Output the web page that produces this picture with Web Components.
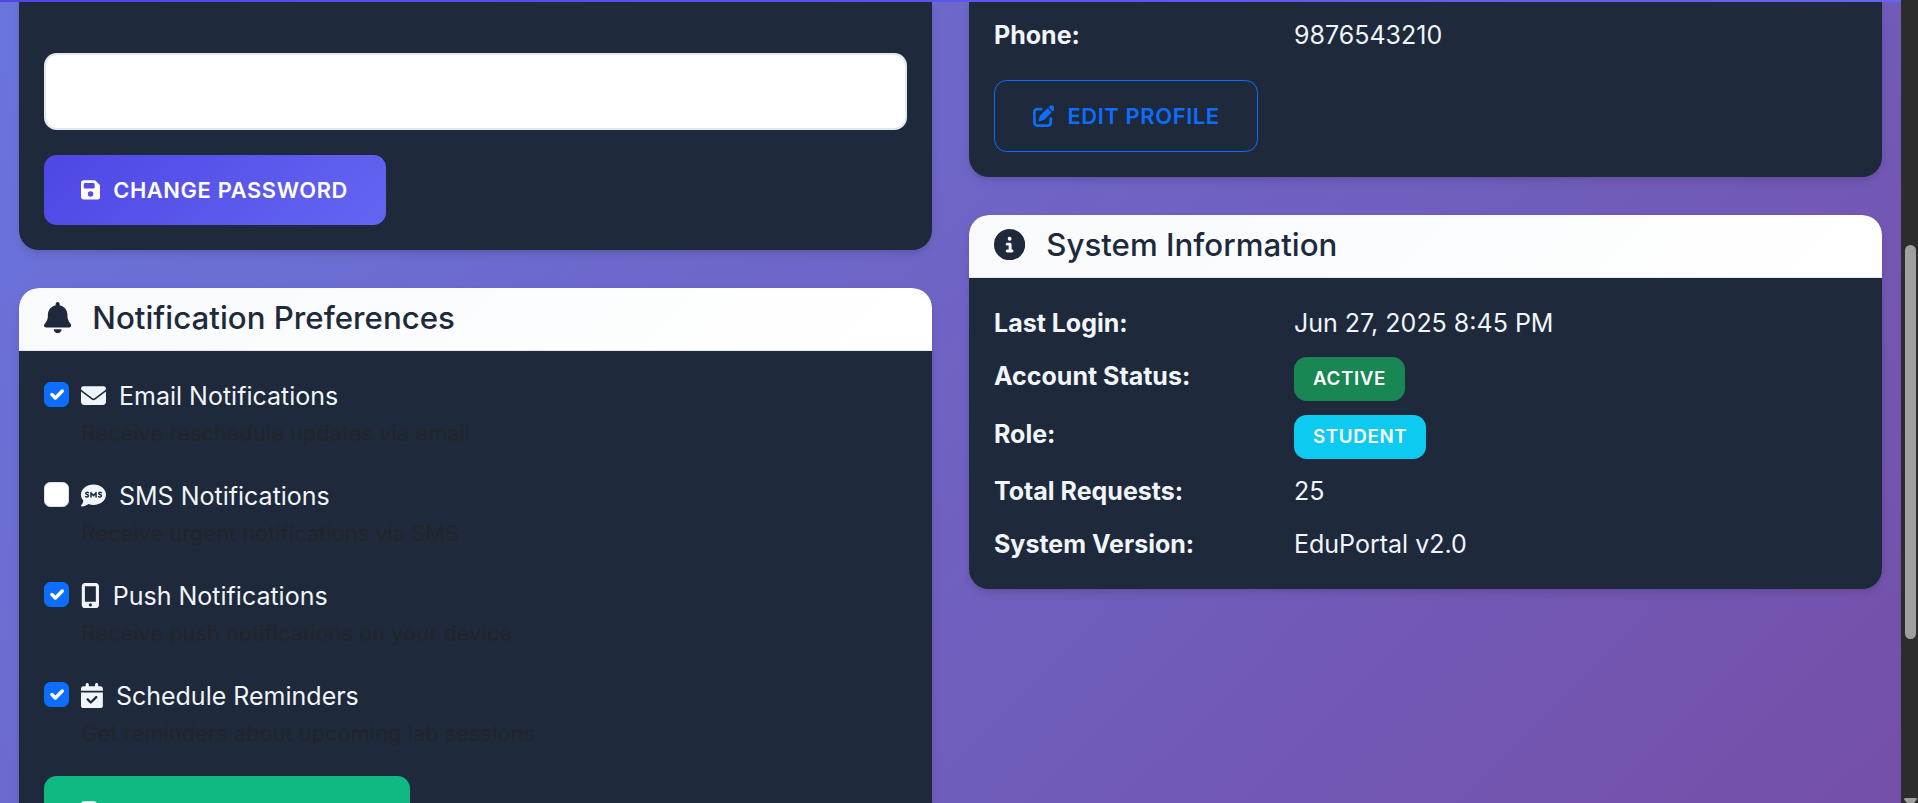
<!DOCTYPE html>
<html lang="en"><head><meta charset="utf-8"><title>EduPortal Settings</title>
<style>
body{margin:0;height:803px;overflow:hidden;font-family:Inter,"Open Sans",sans-serif;font-size:25px;line-height:40px;color:#f1f5f9}
</style></head><body>
<edu-page>
  <edu-card slot="left" class="open-top">
    <edu-field></edu-field>
    <edu-button icon="save" kind="primary">CHANGE PASSWORD</edu-button>
  </edu-card>
  <edu-card slot="left" heading="Notification Preferences" icon="bell">
    <edu-check icon="mail" label="Email Notifications" checked>Receive reschedule updates via email</edu-check>
    <edu-check icon="sms" label="SMS Notifications">Receive urgent notifications via SMS</edu-check>
    <edu-check icon="phone" label="Push Notifications" checked>Receive push notifications on your device</edu-check>
    <edu-check icon="cal" label="Schedule Reminders" checked>Get reminders about upcoming lab sessions</edu-check>
    <edu-button icon="save" kind="success">UPDATE PREFERENCES</edu-button>
  </edu-card>
  <edu-card slot="right" class="open-top short">
    <edu-row label="Phone:">9876543210</edu-row>
    <edu-button icon="edit" kind="outline">EDIT PROFILE</edu-button>
  </edu-card>
  <edu-card slot="right" heading="System Information" icon="info">
    <edu-row label="Last Login:">Jun 27, 2025 8:45 PM</edu-row>
    <edu-row label="Account Status:" class="tagged"><edu-badge style="--bg:#198754">ACTIVE</edu-badge></edu-row>
    <edu-row label="Role:" class="tagged role"><edu-badge style="--bg:#0dcaf0">STUDENT</edu-badge></edu-row>
    <edu-row label="Total Requests:">25</edu-row>
    <edu-row label="System Version:">EduPortal v2.0</edu-row>
  </edu-card>
</edu-page>
<script>
const ICONS={
save:[448,'M64 32C28.7 32 0 60.7 0 96V416c0 35.3 28.7 64 64 64H384c35.3 0 64-28.7 64-64V173.3c0-17-6.7-33.3-18.7-45.3L352 50.7C340 38.7 323.7 32 306.7 32H64zm0 96c0-17.7 14.3-32 32-32H288c17.7 0 32 14.3 32 32v64c0 17.7-14.3 32-32 32H96c-17.7 0-32-14.3-32-32V128zM224 288a64 64 0 1 1 0 128 64 64 0 1 1 0-128z'],
bell:[448,'M224 0c-17.7 0-32 14.3-32 32V51.2C119 66 64 130.6 64 208v18.8c0 47-17.3 92.4-48.5 127.6l-7.4 8.3c-8.4 9.4-10.4 22.9-5.3 34.4S19.4 416 32 416H416c12.6 0 24-7.4 29.2-18.9s3.1-25-5.3-34.4l-7.4-8.3C401.3 319.2 384 273.9 384 226.8V208c0-77.4-55-142-128-156.8V32c0-17.7-14.3-32-32-32zm45.3 493.3c12-12 18.7-28.3 18.7-45.3H224 160c0 17 6.7 33.3 18.7 45.3s28.3 18.7 45.3 18.7s33.3-6.7 45.3-18.7z'],
info:[512,'M256 512A256 256 0 1 0 256 0a256 256 0 1 0 0 512zM216 336h24V272H216c-13.3 0-24-10.7-24-24s10.7-24 24-24h48c13.3 0 24 10.7 24 24v88h8c13.3 0 24 10.7 24 24s-10.7 24-24 24H216c-13.3 0-24-10.7-24-24s10.7-24 24-24zm40-208a32 32 0 1 1 0 64 32 32 0 1 1 0-64z'],
mail:[512,'M48 64C21.5 64 0 85.5 0 112c0 15.1 7.1 29.3 19.2 38.4L236.8 313.6c11.4 8.5 27 8.5 38.4 0L492.8 150.4c12.1-9.1 19.2-23.3 19.2-38.4c0-26.5-21.5-48-48-48H48zM0 176V384c0 35.3 28.7 64 64 64H448c35.3 0 64-28.7 64-64V176L294.4 339.2c-22.8 17.1-54 17.1-76.8 0L0 176z'],
phone:[384,'M16 64C16 28.7 44.7 0 80 0H304c35.3 0 64 28.7 64 64V448c0 35.3-28.7 64-64 64H80c-35.3 0-64-28.7-64-64V64zM224 448a32 32 0 1 0 -64 0 32 32 0 1 0 64 0zM304 64H80V384H304V64z'],
cal:[448,'M128 0c17.7 0 32 14.3 32 32V64H288V32c0-17.7 14.3-32 32-32s32 14.3 32 32V64h48c26.5 0 48 21.5 48 48v48H0V112C0 85.5 21.5 64 48 64H96V32c0-17.7 14.3-32 32-32zM0 192H448V464c0 26.5-21.5 48-48 48H48c-26.5 0-48-21.5-48-48V192zM329 305c9.4-9.4 9.4-24.6 0-33.9s-24.6-9.4-33.9 0l-95 95-47-47c-9.4-9.4-24.6-9.4-33.9 0s-9.4 24.6 0 33.9l64 64c9.4 9.4 24.6 9.4 33.9 0L329 305z'],
edit:[512,'M471.6 21.7c-21.9-21.9-57.3-21.9-79.2 0L362.3 51.7l97.9 97.9 30.1-30.1c21.9-21.9 21.9-57.3 0-79.2L471.6 21.7zm-299.2 220c-6.1 6.1-10.8 13.6-13.5 21.9l-29.6 88.8c-2.9 8.6-.6 18.1 5.8 24.6s15.9 8.7 24.6 5.8l88.8-29.6c8.2-2.7 15.7-7.4 21.9-13.5L437.7 172.3 339.7 74.3 172.4 241.7zM96 64C43 64 0 107 0 160V416c0 53 43 96 96 96H352c53 0 96-43 96-96V320c0-17.7-14.3-32-32-32s-32 14.3-32 32v96c0 17.7-14.3 32-32 32H96c-17.7 0-32-14.3-32-32V160c0-17.7 14.3-32 32-32h96c17.7 0 32-14.3 32-32s-14.3-32-32-32H96z']
};
function icon(name,h){
  if(name==='sms')return `<svg class="i" width="${h}" height="${h}" viewBox="0 0 512 512"><path fill="currentColor" d="M256 448c141.400 0 256-93.100 256-208S397.400 32 256 32S0 125.100 0 240c0 45.100 17.700 86.800 47.700 120.900c-1.900 24.500-11.400 46.300-21.400 62.900c-5.500 9.200-11.100 16.600-15.200 21.600c-2.100 2.500-3.700 4.400-4.900 5.700c-6.600 6.600-8 14.800-5.200 21.600S9.800 480 16 480c28.700 0 57.600-8.900 81.600-19.300c22.900-10 42.400-21.900 54.300-30.600c31.800 11.500 67 17.900 104.100 17.900z"/><g fill="none" stroke="#1e293b" stroke-width="30" stroke-linecap="round" stroke-linejoin="round"><path d="M150 197C134 189 99 187 97 211C96 240 153 233 153 263C152 292 110 287 94 279"/><path d="M204 286V197L256 262L308 197V286"/><path d="M415 197C399 189 364 187 362 211C361 240 418 233 418 263C417 292 375 287 359 279"/></g></svg>`;
  const [w,d]=ICONS[name];
  return `<svg class="i" width="${h*w/512}" height="${h}" viewBox="0 0 ${w} 512"><path fill="currentColor" fill-rule="evenodd" d="${d}"/></svg>`;
}
function define(tag,render){
  customElements.define(tag,class extends HTMLElement{
    connectedCallback(){if(!this.shadowRoot)this.attachShadow({mode:'open'}).innerHTML=render(this)}
  });
}
define('edu-page',()=>`<style>
:host{display:grid;grid-template-columns:1901px 17px;height:803px;position:relative;overflow:hidden}
main{display:grid;grid-template-columns:913px 913px;column-gap:37px;padding:0 19px;height:803px;box-sizing:border-box;overflow:hidden;background:linear-gradient(135deg,#667eea,#764ba2) 0 -663px/100% 1783px no-repeat}
.col{display:flex;flex-direction:column;gap:38px}
.nav{position:absolute;left:0;top:0;width:1901px;height:2px;background:linear-gradient(135deg,#4f46e5,#6366f1);box-shadow:0 5px 8px -1px rgba(0,0,0,.1),0 2px 5px -1px rgba(0,0,0,.06)}
.bar{background:#2c2c2c;height:803px;display:flex;flex-direction:column;align-items:center;justify-content:space-between}
.thumb{width:11px;height:394px;margin:245px 0 0 2px;border-radius:6px;background:#9f9f9f}
.bar svg{display:block;margin-left:2px}
</style><main><div class="col"><slot name="left"></slot></div><div class="col"><slot name="right"></slot></div></main>
<div class="bar"><div class="thumb"></div><svg width="13" height="5"><path d="M1 0H12Q13.500 1 12.500 2L10 5H3L.5 2Q-.5 1 1 0Z" fill="#9f9f9f"/></svg></div><div class="nav"></div>`);
define('edu-card',el=>{const h=el.getAttribute('heading');return `<style>
:host{display:block;flex:none;border-radius:20px;background:#1e293b;overflow:hidden;box-shadow:0 5px 8px -1px rgba(0,0,0,.1),0 2px 5px -1px rgba(0,0,0,.06)}
:host(.open-top){border-radius:0 0 20px 20px;height:250px}
:host(.short){height:177px}
header{display:flex;align-items:center;height:62px;border-bottom:1px solid #e2e8f0;padding:0 25px;background:linear-gradient(135deg,#f8fafc,#fff);color:#1e293b;font-size:31.25px;font-weight:500;line-height:38px}
header span{padding-bottom:2px}
header .i{margin:0 21px 3px 0}
.body{padding:25px}
:host(.open-top) .body{padding:0 25px}
:host(.open-top:not(.short)) .body{padding-top:53px}
:host(.short) .body{padding-top:15px}
</style>${h?`<header>${icon(el.getAttribute('icon'),31.25)}<span>${h}</span></header>`:''}<div class="body"><slot></slot></div>`});
define('edu-field',()=>`<style>:host{display:block;margin-bottom:25px}
div{height:77px;box-sizing:border-box;border:2px solid #e2e8f0;border-radius:12.5px;background:#fff}</style><div></div>`);
define('edu-button',el=>`<style>
:host{display:flex}
button{display:flex;align-items:center;gap:13px;height:70px;padding:0 37.500px 0 37px;border:0;border-radius:12.5px;font:600 21.875px/35px Inter,sans-serif;letter-spacing:.64px;color:#fff;white-space:nowrap}
.primary{background:linear-gradient(135deg,#4f46e5,#6366f1)}
.success{background:#10b981}
.outline{height:72px;padding-left:37.5px;border:1px solid #0d6efd;color:#0d6efd;background:none;margin-top:12.5px}
</style><button class="${el.getAttribute('kind')}">${icon(el.getAttribute('icon'),21.875)}<span><slot></slot></span></button>`);
define('edu-row',el=>`<style>
:host{display:grid;grid-template-columns:300px 1fr;margin-bottom:12.5px}
:host(:last-child){margin-bottom:0}
:host(.tagged){height:45.5px}
:host(.role){height:45px}
b{font-weight:700}
</style><b>${el.getAttribute('label')}</b><span><slot></slot></span>`);
define('edu-badge',()=>`<style>
:host{display:flex;width:max-content;height:44px;margin-top:1.5px;box-sizing:border-box;align-items:center;padding:0 18.75px 0 19px;border-radius:12.5px;background:var(--bg);color:#fff;font-size:18.75px;font-weight:600;line-height:30px;letter-spacing:.625px}
span{padding-bottom:1px}
</style><span><slot></slot></span>`);
define('edu-check',el=>{const on=el.hasAttribute('checked');return `<style>
:host{display:grid;grid-template-columns:25px 1fr;column-gap:12.5px;margin-bottom:25px}
.box{width:25px;height:25px;box-sizing:border-box;margin-top:6px;border-radius:6.25px;border:1px solid #dee2e6;background:#fff}
.box.on{background:#0d6efd;border-color:#0d6efd}
.box svg{display:block;width:23px;height:23px}
.label{display:flex;align-items:center;gap:13px;height:40px;margin-left:-.5px}
.label .i{margin-bottom:1px}
small{grid-column:2;font-size:21.875px;line-height:35px;color:#212529}
</style><div class="box ${on?'on':''}">${on?'<svg viewBox="0 0 20 20"><path d="m6 10 3 3 6-6" fill="none" stroke="#fff" stroke-width="3" stroke-linecap="round" stroke-linejoin="round"/></svg>':''}</div><div class="label">${icon(el.getAttribute('icon'),25)}<span>${el.getAttribute('label')}</span></div><small><slot></slot></small>`});
</script>
</body></html>
